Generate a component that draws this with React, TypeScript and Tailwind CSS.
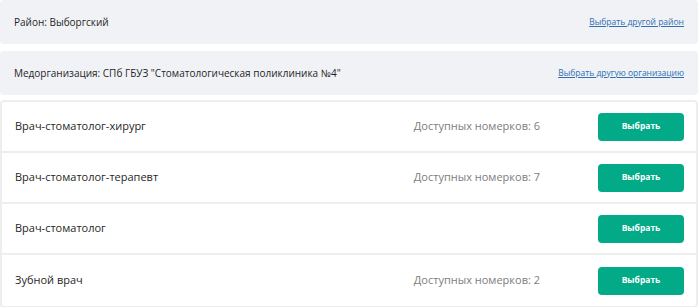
import React from "react";

const rows = [
  { name: "Врач-стоматолог-хирург", count: "Доступных номерков: 6" },
  { name: "Врач-стоматолог-терапевт", count: "Доступных номерков: 7" },
  { name: "Врач-стоматолог", count: "" },
  { name: "Зубной врач", count: "Доступных номерков: 2" },
];

export default function App() {
  return (
    <div
      className="w-[700px] h-[307px] bg-white overflow-hidden pr-[2px]"
      style={{ fontFamily: '"Open Sans", "Noto Sans", sans-serif' }}
    >
      <div className="flex flex-col">
        <div className="h-[44px] bg-[#f1f2f6] rounded-[4px] flex items-center justify-between pl-[14px] pr-[14px]">
          <span className="text-[10px] text-[#1f1f1f]">Район: Выборгский</span>
          <a href="#" className="text-[8.5px] text-[#2f6fb3] underline">Выбрать другой район</a>
        </div>
        <div className="mt-[7px] h-[44px] bg-[#f1f2f6] rounded-[4px] flex items-center justify-between pl-[14px] pr-[14px]">
          <span className="text-[10px] text-[#1f1f1f]">
            Медорганизация: СПб ГБУЗ "Стоматологическая поликлиника №4"
          </span>
          <a href="#" className="text-[8.5px] text-[#2f6fb3] underline">Выбрать другую организацию</a>
        </div>
        <div className="mt-[5px] border-2 border-[#eeeeee] rounded-[4px]">
          {rows.map((r, i) => (
            <div
              key={i}
              className={
                "h-[51px] flex items-center pl-[13px] pr-[12px] " +
                (i < rows.length - 1 ? "border-b-2 border-[#eeeeee]" : "")
              }
            >
              <span className="flex-1 text-[11px] text-[#1f1f1f]">{r.name}</span>
              <span className="text-[11px] text-[#7d7d7d] mr-[58px]">{r.count}</span>
              <button className="w-[86px] h-[28px] rounded-[4px] bg-[#03aa88] text-white text-[8.5px] font-bold">
                Выбрать
              </button>
            </div>
          ))}
        </div>
      </div>
    </div>
  );
}
